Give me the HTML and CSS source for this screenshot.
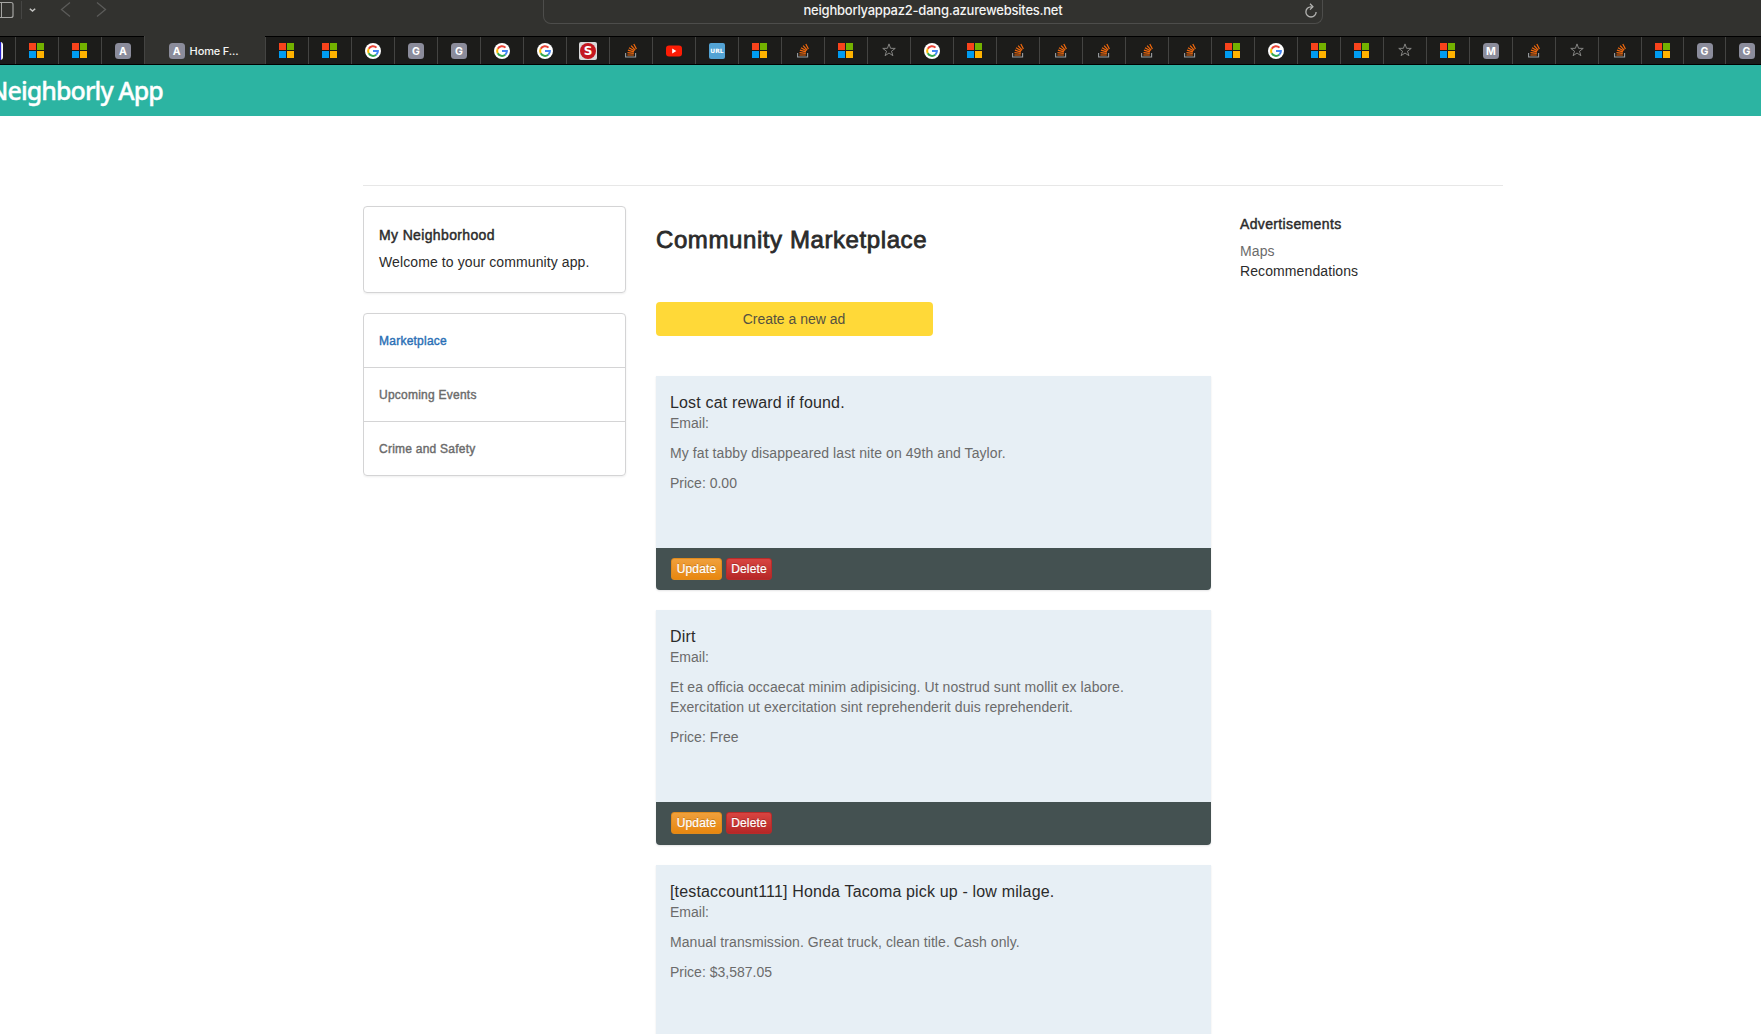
FILE: index.html
```html
<!DOCTYPE html>
<html lang="en">
<head>
<meta charset="utf-8">
<title>Home Feed - Neighborly App</title>
<link rel="stylesheet" href="styles.css">
</head>
<body>
<svg class="sprite" aria-hidden="true">
  <symbol id="ms" viewBox="0 0 15 15"><path fill="#f8431c" d="M0 0h7v7H0z"/><path fill="#73b100" d="M8 0h7v7H8z"/><path fill="#009cf0" d="M0 8h7v7H0z"/><path fill="#ffb300" d="M8 8h7v7H8z"/></symbol>
  <symbol id="google" viewBox="0 0 16 16"><circle cx="8" cy="8" r="8" fill="#fff"/><g fill="none" stroke-width="2"><path stroke="#ea4335" d="M3.7 5.7A4.9 4.9 0 0 1 11.5 4.6"/><path stroke="#fbbc05" d="M3.7 10.3A4.9 4.9 0 0 1 3.7 5.7"/><path stroke="#34a853" d="M3.7 10.3A4.9 4.9 0 0 0 11.2 11.7"/><path stroke="#4285f4" d="M11.2 11.7A4.9 4.9 0 0 0 12.9 8H8"/></g></symbol>
  <symbol id="so" viewBox="0 0 12 15"><path d="M.6 10v4h10V10" fill="none" stroke="#9a9da0" stroke-width="1.1"/><g stroke="#f2690d" stroke-width="1.2"><path d="M2.4 12h6.4M2.5 9.6l6.3.7M2.9 7.2l6 1.7M4 4.8l5.4 3M6.1 2.6l4.1 4.6M8.800.900l2.600 5.200"/></g></symbol>
  <symbol id="star" viewBox="0 0 14 14"><path d="M7 .9l1.55 4.4 4.7.1-3.75 2.8 1.4 4.5L7 10l-3.9 2.7 1.4-4.5L.75 5.4l4.7-.1z" fill="none" stroke="#858583" stroke-width="1" stroke-linejoin="round"/></symbol>
  <symbol id="yt" viewBox="0 0 16 12"><rect y=".5" width="16" height="11" rx="3" fill="#fc1c05"/><path d="M6.2 3.6v4.8L10.4 6z" fill="#fff"/></symbol>
</svg>

<div class="toolbar">
  <svg class="nav-icons" viewBox="0 0 120 36" fill="none"><rect x="-6" y="2.5" width="19" height="15" rx="2" stroke="#a4a4a2" stroke-width="1.2"/><path d="M1.500 2.500v15" stroke="#a4a4a2"/><path d="M21.500 1v18" stroke="#464644"/><path d="M29.800 8.700l2.700 2.400 2.700-2.400" stroke="#c4c4c2" stroke-width="1.500"/><path d="M70 2.500l-8.500 7L70 16.500M97 2.500l8.500 7-8.500 7" stroke="#5b5b59" stroke-width="1.300"/></svg>
  <div class="address"><span class="url">neighborlyappaz2-dang.azurewebsites.net</span>
    <svg class="reload" width="14" height="18" viewBox="0 0 14 18" fill="none" stroke="#b4b4b2" stroke-width="1.300"><path d="M7.500 5.800H7A5.100 5.100 0 1 0 12.100 10.900M6 2.800l2.900 2.900-2.900 2.900" /></svg>
  </div>
</div>

<div class="tabs">
  <div class="tab first"><span class="partial"></span></div>
  <div class="tab"><svg class="i-ms"><use href="#ms"/></svg></div>
  <div class="tab"><svg class="i-ms"><use href="#ms"/></svg></div>
  <div class="tab"><span class="letter">A</span></div>
  <div class="tab active"><span class="letter">A</span><span class="tab-title">Home F...</span></div>
  <div class="tab"><svg class="i-ms"><use href="#ms"/></svg></div>
  <div class="tab"><svg class="i-ms"><use href="#ms"/></svg></div>
  <div class="tab"><svg class="i-google"><use href="#google"/></svg></div>
  <div class="tab"><span class="letter">G</span></div>
  <div class="tab"><span class="letter">G</span></div>
  <div class="tab"><svg class="i-google"><use href="#google"/></svg></div>
  <div class="tab"><svg class="i-google"><use href="#google"/></svg></div>
  <div class="tab"><span class="s-logo"><b>S</b></span></div>
  <div class="tab"><svg class="i-so"><use href="#so"/></svg></div>
  <div class="tab"><svg class="i-yt"><use href="#yt"/></svg></div>
  <div class="tab"><span class="url-logo">URL</span></div>
  <div class="tab"><svg class="i-ms"><use href="#ms"/></svg></div>
  <div class="tab"><svg class="i-so"><use href="#so"/></svg></div>
  <div class="tab"><svg class="i-ms"><use href="#ms"/></svg></div>
  <div class="tab"><svg class="i-star"><use href="#star"/></svg></div>
  <div class="tab"><svg class="i-google"><use href="#google"/></svg></div>
  <div class="tab"><svg class="i-ms"><use href="#ms"/></svg></div>
  <div class="tab"><svg class="i-so"><use href="#so"/></svg></div>
  <div class="tab"><svg class="i-so"><use href="#so"/></svg></div>
  <div class="tab"><svg class="i-so"><use href="#so"/></svg></div>
  <div class="tab"><svg class="i-so"><use href="#so"/></svg></div>
  <div class="tab"><svg class="i-so"><use href="#so"/></svg></div>
  <div class="tab"><svg class="i-ms"><use href="#ms"/></svg></div>
  <div class="tab"><svg class="i-google"><use href="#google"/></svg></div>
  <div class="tab"><svg class="i-ms"><use href="#ms"/></svg></div>
  <div class="tab"><svg class="i-ms"><use href="#ms"/></svg></div>
  <div class="tab"><svg class="i-star"><use href="#star"/></svg></div>
  <div class="tab"><svg class="i-ms"><use href="#ms"/></svg></div>
  <div class="tab"><span class="letter">M</span></div>
  <div class="tab"><svg class="i-so"><use href="#so"/></svg></div>
  <div class="tab"><svg class="i-star"><use href="#star"/></svg></div>
  <div class="tab"><svg class="i-so"><use href="#so"/></svg></div>
  <div class="tab narrow"><svg class="i-ms"><use href="#ms"/></svg></div>
  <div class="tab narrow"><span class="letter">G</span></div>
  <div class="tab narrow"><span class="letter">G</span></div>
</div>

<header class="brand"><span class="brand-name">Neighborly App</span></header>

<div class="container">
  <div class="rule"></div>
  <div class="columns">
    <aside class="left">
      <section class="panel welcome">
        <h5 class="medium">My Neighborhood</h5>
        <p>Welcome to your community app.</p>
      </section>
      <nav class="panel menu">
        <a class="item selected">Marketplace</a>
        <a class="item">Upcoming Events</a>
        <a class="item">Crime and Safety</a>
      </nav>
    </aside>
    <main class="center">
      <h1>Community Marketplace</h1>
      <a class="create">Create a new ad</a>
      <article class="ad">
        <div class="ad-body">
          <h2>Lost cat reward if found.</h2>
          <p class="email">Email:</p>
          <p>My fat tabby disappeared last nite on 49th and Taylor.</p>
          <p class="price">Price: 0.00</p>
        </div>
        <div class="ad-actions"><a class="btn update">Update</a><a class="btn delete">Delete</a></div>
      </article>
      <article class="ad tall">
        <div class="ad-body">
          <h2>Dirt</h2>
          <p class="email">Email:</p>
          <p>Et ea officia occaecat minim adipisicing. Ut nostrud sunt mollit ex labore.<br>Exercitation ut exercitation sint reprehenderit duis reprehenderit.</p>
          <p class="price">Price: Free</p>
        </div>
        <div class="ad-actions"><a class="btn update">Update</a><a class="btn delete">Delete</a></div>
      </article>
      <article class="ad">
        <div class="ad-body">
          <h2>[testaccount111] Honda Tacoma pick up - low milage.</h2>
          <p class="email">Email:</p>
          <p>Manual transmission. Great truck, clean title. Cash only.</p>
          <p class="price">Price: $3,587.05</p>
        </div>
      </article>
    </main>
    <aside class="right">
      <h5 class="medium">Advertisements</h5>
      <a class="muted">Maps</a>
      <a>Recommendations</a>
    </aside>
  </div>
</div>
</body>
</html>
```
FILE: styles.css
```css
* { box-sizing: border-box; }
body {
  display: flex;
  flex-direction: column;
  margin: 0;
  height: 100vh;
  overflow: hidden;
  background: #fff;
  color: #2b2b2b;
  font: 14px/20px "Liberation Sans", Arial, sans-serif;
}
h1, h2, h5, p { margin: 0; font-weight: 400; }
.sprite { display: none; }

/* browser toolbar */
.toolbar {
  flex: none;
  display: flex;
  height: 36px;
  background: #32322f;
}
.nav-icons { flex: none; width: 120px; height: 36px; margin-right: 423px; }
.address {
  display: flex;
  align-items: flex-start;
  width: 780px;
  height: 24px;
  border: 1px solid #4d4d4b;
  border-top: 0;
  border-radius: 0 0 8px 8px;
}
.url {
  flex: 1;
  padding-left: 29px;
  text-align: center;
  color: #f4f4f3;
  font: 500 13px/21px Inter, sans-serif;
  letter-spacing: -.23px;
}
.reload { flex: none; margin: 1px 4px 0 11px; }

/* tab strip */
.tabs {
  flex: none;
  display: flex;
  height: 29px;
  padding: 1px 0;
  background: #000;
  overflow: hidden;
}
.tab {
  flex: none;
  display: flex;
  align-items: center;
  justify-content: center;
  width: 43px;
  height: 27px;
  border-left: 1px solid #444442;
  background: #1c1c1a;
}
.tab.first { width: 15px; border: 0; justify-content: flex-start; }
.tab.narrow { width: 42px; }
.tab.active {
  width: 121px;
  height: 28px;
  margin-top: -1px;
  padding: 1px 3px 0 0;
  gap: 5px;
  background: #32322f;
}
.partial { width: 3px; height: 18px; background: #dcdcec; border-right: 1px solid #fff; border-left: 1px solid #2620d0; border-radius: 0 4px 4px 0; }
.i-ms { width: 15px; height: 15px; margin-top: -1px; margin-right: 1px; }
.i-google { width: 16px; height: 16px; }
.i-so { width: 12px; height: 15px; }
.i-star { width: 14px; height: 14px; margin-top: -1px; }
.i-yt { width: 16px; height: 12px; }
.letter {
  width: 16px;
  height: 16px;
  border-radius: 3.5px;
  background: #8b8c9b;
  color: #fff;
  text-align: center;
  font: 700 10.5px/17px Inter, sans-serif;
}
.tab-title { color: #f4f4f3; font: 500 11px/16px Inter, sans-serif; letter-spacing: -.15px; }
.s-logo { display: flex; align-items: center; justify-content: center; width: 18px; height: 18px; border-radius: 2px; background: #dadada; }
.s-logo b { width: 16px; height: 16px; border-radius: 8px; background: #c4161f; color: #fff; text-align: center; font: 700 12px/16px "DejaVu Sans", sans-serif; }
.url-logo { width: 16px; height: 16px; border-radius: 2px; background: #53a3d4; color: #fff; text-align: center; font: 700 6px/16px "DejaVu Sans", sans-serif; }

/* app header */
.brand {
  flex: none;
  height: 51px;
  background: #2cb4a2;
  color: #fff;
  font: 500 25px/50px "Noto Sans", sans-serif;
}
.brand-name { margin-left: -11px; letter-spacing: -.93px; -webkit-text-stroke: .35px; }

/* page */
.container { flex: 1; min-height: 0; width: 1140px; margin: 69px 0 0 363px; overflow: hidden; }
.rule { height: 1px; background: #e7e7e7; }
.columns { display: flex; margin-top: 20px; }
.left { width: 263px; margin-right: 30px; }
.panel { border: 1px solid #d4d4d5; border-radius: 4px; box-shadow: 0 1px 2px rgba(34,36,38,.08); }
.welcome { height: 87px; padding: 18px 15px; }
.welcome p { margin-top: 7px; letter-spacing: .1px; }
.menu { margin-top: 20px; }
.item { display: block; height: 54px; padding: 17px 15px; color: #6b6b6b; font-size: 12px; letter-spacing: .24px; -webkit-text-stroke: .4px; }
.item + .item { border-top: 1px solid #d4d4d5; }
.item.selected { height: 53px; color: #2a6fb5; }
.medium { font-size: 14px; letter-spacing: .36px; -webkit-text-stroke: .45px; }

.center { width: 555px; margin-right: 29px; }
h1 { margin-top: 18px; font-size: 24px; line-height: 32px; letter-spacing: .59px; -webkit-text-stroke: .8px; }
.create { display: block; width: 277px; height: 34px; margin: 46px 0 40px; padding-right: 1px; border-radius: 4px; background: #ffd938; color: #555141; text-align: center; line-height: 34px; }
.ad { height: 214px; margin-bottom: 20px; border-radius: 0 0 4px 4px; background: #e7eff5; overflow: hidden; box-shadow: 0 1px 2px rgba(34,36,38,.12); }
.ad.tall { height: 235px; }
.ad-body { height: 172px; padding: 17px 14px; color: #6b6b6b; }
.tall .ad-body { height: 192px; }
.ad-body h2 { color: #2b2b2b; font-size: 16px; line-height: 20px; letter-spacing: .16px; }
.ad-body p { margin-bottom: 10px; letter-spacing: .08px; }
.ad-body .email, .ad-body .price { letter-spacing: 0; }
.ad-actions { display: flex; gap: 4px; height: 43px; padding: 10px 15px; background: #445151; }
.btn { height: 22px; border: 1px solid; border-radius: 3px; color: #fff; font-size: 12px; line-height: 20px; letter-spacing: .15px; text-align: center; text-shadow: 0 -1px 0 rgba(0,0,0,.2); -webkit-text-stroke: .2px; }
.update { width: 51px; background: linear-gradient(#f0a03c, #e8870f); border-color: #e08a1c; }
.delete { width: 46px; background: linear-gradient(#d84440, #b62727); border-color: #b82b2a; }

.right { display: flex; flex-direction: column; padding-top: 8px; letter-spacing: .1px; }
.right h5 { margin-bottom: 7px; }
.muted { color: #6b6b6b; }
```
